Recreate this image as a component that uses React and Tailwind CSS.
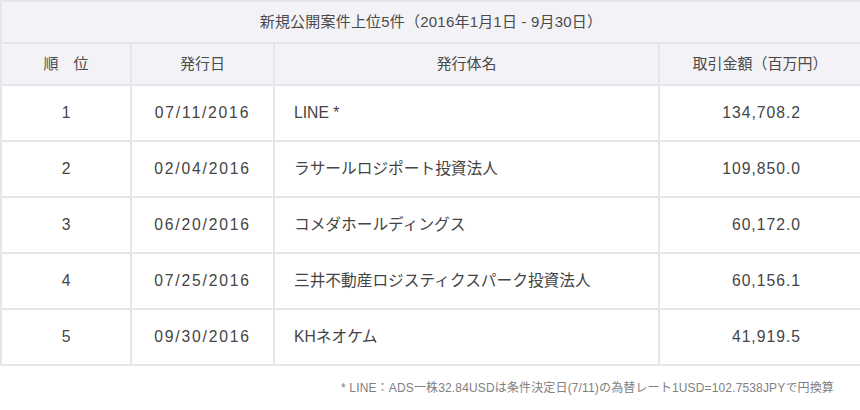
import React from 'react';

const rows = [
  { rank: '1', date: '07/11/2016', name: 'LINE *', amount: '134,708.2' },
  { rank: '2', date: '02/04/2016', name: 'ラサールロジポート投資法人', amount: '109,850.0' },
  { rank: '3', date: '06/20/2016', name: 'コメダホールディングス', amount: '60,172.0' },
  { rank: '4', date: '07/25/2016', name: '三井不動産ロジスティクスパーク投資法人', amount: '60,156.1' },
  { rank: '5', date: '09/30/2016', name: 'KHネオケム', amount: '41,919.5' },
];

const font = { fontFamily: '"Liberation Sans", "Noto Sans CJK JP", sans-serif' };

export default function App() {
  return (
    <div className="w-[860px] h-[410px] bg-white text-[#444]" style={font}>
      <table className="w-[860px] border-collapse table-fixed">
        <colgroup>
          <col className="w-[130px]" />
          <col className="w-[143px]" />
          <col className="w-[385px]" />
          <col className="w-[202px]" />
        </colgroup>
        <thead>
          {/* Title band */}
          <tr className="h-[42px] bg-[#f3f3f7]">
            <th
              colSpan={4}
              className="border-2 border-[#e6e6ea] text-center text-[15px] font-normal text-[#4a4a4a] tracking-[0.2px]"
            >
              新規公開案件上位5件（2016年1月1日 - 9月30日）
            </th>
          </tr>
          {/* Column headers */}
          <tr className="h-[42px] bg-[#f3f3f7] text-[15px] text-[#4a4a4a]">
            <th className="border-2 border-[#e6e6ea] font-normal text-center">順　位</th>
            <th className="border-2 border-[#e6e6ea] font-normal text-center">発行日</th>
            <th className="border-2 border-[#e6e6ea] font-normal text-center">発行体名</th>
            <th className="border-2 border-[#e6e6ea] font-normal text-center">取引金額（百万円）</th>
          </tr>
        </thead>
        <tbody>
          {rows.map((r) => (
            <tr key={r.rank} className="h-[56px] text-[15.7px]">
              <td className="border-2 border-[#e6e6ea] text-center">{r.rank}</td>
              <td className="border-2 border-[#e6e6ea] text-center tracking-[1.8px]">{r.date}</td>
              <td className="border-2 border-[#e6e6ea] pl-[19px]">{r.name}</td>
              <td className="border-2 border-[#e6e6ea] text-right pr-[59px] tracking-[1px]">{r.amount}</td>
            </tr>
          ))}
        </tbody>
      </table>

      {/* Footnote */}
      <p className="mt-[13px] pr-[26px] text-right text-[12px] text-[#808080] tracking-[0.15px]">
        * LINE：ADS一株32.84USDは条件決定日(7/11)の為替レート1USD=102.7538JPYで円換算
      </p>
    </div>
  );
}
